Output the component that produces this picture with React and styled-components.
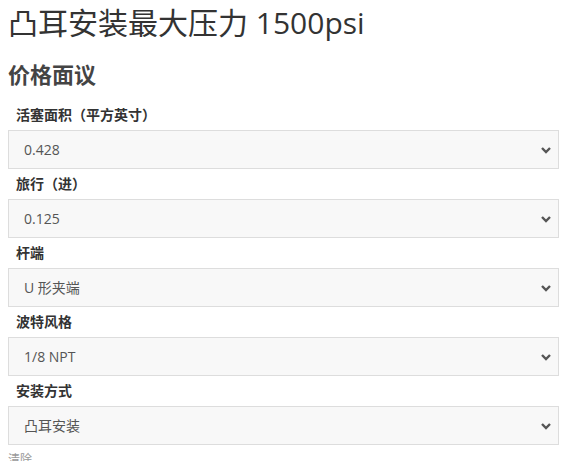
import styled, { createGlobalStyle } from 'styled-components';

const GlobalStyle = createGlobalStyle`
    body {
        margin: 0;
        background: #fff;
        font-family: "Open Sans", "Noto Sans CJK SC", sans-serif;
        color: #333;
    }
`

const Page = styled.div`
    padding: 4px 8px 0;
    width: 551px;
`

const Title = styled.h1`
    margin: 0;
    font-size: 30px;
    font-weight: 400;
    line-height: 38px;
    color: #333;
`

const Heading = styled.h3`
    margin: 18px 0 17px;
    font-size: 22px;
    font-weight: 700;
    line-height: 28px;
    color: #444;
`

const Field = styled.div`
    display: flex;
    flex-direction: column;
    gap: 5px;
    margin-bottom: 5px;
`

const Label = styled.label`
    padding-left: 8px;
    font-size: 14px;
    font-weight: 700;
    line-height: 20px;
    color: #333;
`

const SelectBox = styled.div`
    position: relative;
    height: 39px;
    box-sizing: border-box;
    border: 1px solid #ddd;
    background: #f8f8f8;
    display: flex;
    align-items: center;
`

const Select = styled.select`
    appearance: none;
    border: none;
    background: transparent;
    width: 100%;
    height: 100%;
    padding: 0 15px;
    font-family: "Open Sans", "Noto Sans CJK SC", sans-serif;
    font-size: 14px;
    color: #555;
    outline: none;
`

const Arrow = styled.svg`
    position: absolute;
    right: 6px;
    top: 15px;
    pointer-events: none;
`

const Clear = styled.div`
    margin-top: 5px;
    font-size: 12px;
    color: #999;
`

const fields = [
    { label: '活塞面积（平方英寸）', value: '0.428' },
    { label: '旅行（进）', value: '0.125' },
    { label: '杆端', value: 'U 形夹端' },
    { label: '波特风格', value: '1/8 NPT' },
    { label: '安装方式', value: '凸耳安装' },
]

const App = () => {
    return (
    <Page>
        <GlobalStyle />
        <Title>凸耳安装最大压力 1500psi</Title>
        <Heading>价格面议</Heading>
        {fields.map(f => (
            <Field key={f.label}>
                <Label>{f.label}</Label>
                <SelectBox>
                    <Select defaultValue={f.value}>
                        <option>{f.value}</option>
                    </Select>
                    <Arrow width="12" height="8" viewBox="0 0 12 8">
                        <path d="M2 2 L6 6 L10 2" stroke="#555" strokeWidth="2.4" fill="none" />
                    </Arrow>
                </SelectBox>
            </Field>
        ))}
        <Clear>清除</Clear>
    </Page>
    )
}

export default App;
